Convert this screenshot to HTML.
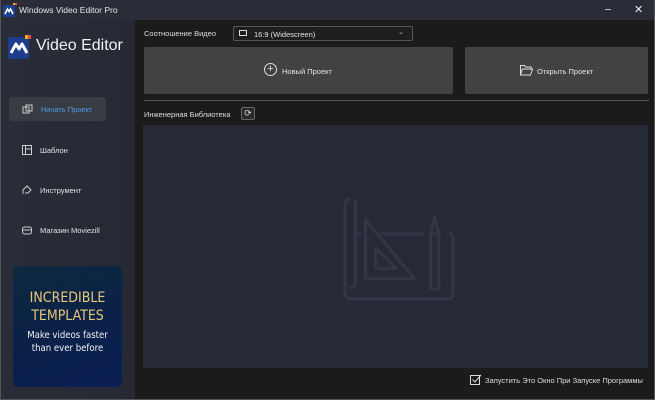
<!DOCTYPE html>
<html><head><meta charset="utf-8"><style>
*{margin:0;padding:0;box-sizing:border-box}
body{width:655px;height:400px;overflow:hidden;background:#1b1b1b;font-family:"Liberation Sans","DejaVu Sans",sans-serif;position:relative;color:#ddd}
.frame{position:absolute;inset:0;border:1px solid #555;border-top:none;pointer-events:none}
.title{position:absolute;left:0;top:0;width:655px;height:20px;background:#2a2c38;font-size:8.5px;color:#e6e6e6}
.side{position:absolute;left:0;top:20px;width:135px;height:380px;background:linear-gradient(90deg,#2a2d38,#262933)}
.main{position:absolute;left:135px;top:20px;width:520px;height:380px;background:#1b1b1b}
.abs{position:absolute}
.nav{position:absolute;left:22px;font-size:7.5px;color:#e4e4e4;display:flex;align-items:center;gap:8px}
</style></head><body>
<div class="title">
 <svg class="abs" style="left:3px;top:3px" width="14" height="14" viewBox="0 0 14 14"><rect x="0" y="2" width="12" height="12" fill="#1c3f8f"/><path d="M2 11 L4.5 6 L6 8.5 L7.5 6 L10 11" stroke="#fff" stroke-width="1.6" fill="none"/><rect x="10" y="0" width="2" height="2" fill="#f5a623"/><rect x="12" y="0" width="2" height="2" fill="#e84d3d"/></svg>
 <span class="abs" style="left:19px;top:5px">Windows Video Editor Pro</span>
 <div class="abs" style="left:605px;top:9px;width:6px;height:1px;background:#bbb"></div>
 <span class="abs" style="left:634px;top:3px;font-size:11px;font-weight:bold;color:#eee">✕</span>
</div>
<div class="side">
 <svg class="abs" style="left:8px;top:15px" width="24" height="24" viewBox="0 0 24 24"><rect x="0" y="2" width="21" height="22" rx="1" fill="#1d3c8c"/><path d="M3 18 L8 9 L11 14 L14 9 L19 18" stroke="#fff" stroke-width="3" fill="none" stroke-linejoin="round"/><rect x="17" y="0" width="3" height="4" fill="#f5a623"/><rect x="20" y="0" width="3" height="4" fill="#e84d3d"/></svg>
 <span class="abs" style="left:36px;top:17px;font-size:16px;color:#f2f2f2">Video Editor</span>
 <div class="abs" style="left:9px;top:77px;width:97px;height:24px;background:#3a3c43;border-radius:3px"></div>
 <div class="nav" style="top:84px;color:#4c9be8"><svg width="11" height="11" viewBox="0 0 11 11" fill="none" stroke="#ccc" stroke-width="1"><rect x="1" y="3" width="6" height="6"/><rect x="4" y="1" width="6" height="6"/></svg>Начать Проект</div>
 <div class="nav" style="top:125px"><svg width="10" height="10" viewBox="0 0 10 10" fill="none" stroke="#ccc" stroke-width="1"><rect x=".5" y=".5" width="9" height="9"/><path d="M3.5 .5V9.5M3.5 4H9.5"/></svg>Шаблон</div>
 <div class="nav" style="top:165px"><svg width="10" height="10" viewBox="0 0 10 10" fill="none" stroke="#ccc" stroke-width="1"><path d="M1 9V5L5 1L9 5L6 8H3"/></svg>Инструмент</div>
 <div class="nav" style="top:205px"><svg width="10" height="10" viewBox="0 0 10 10" fill="none" stroke="#ccc" stroke-width="1"><rect x=".5" y="2" width="9" height="7" rx="2"/><path d="M.5 5H9.5"/></svg>Магазин Moviezill</div>
 <div class="abs" style="left:13px;top:246px;width:109px;height:121px;border-radius:4px;background:linear-gradient(160deg,#0d2a3e 0%,#0b2147 50%,#0a1e55 100%);text-align:center;overflow:hidden">
  <div style="margin-top:23px;color:#e8c77a;font-size:14px;line-height:18px;font-family:'DejaVu Sans Condensed','DejaVu Sans',sans-serif">INCREDIBLE<br>TEMPLATES</div>
  <div style="margin-top:4px;color:#f2f2f2;font-size:9.5px;line-height:13px;font-family:'DejaVu Sans Condensed','DejaVu Sans',sans-serif">Make videos faster<br>than ever before</div>
 </div>
</div>
<div class="main">
 <span class="abs" style="left:9px;top:9px;font-size:7.5px;color:#ddd">Соотношение Видео</span>
 <div class="abs" style="left:98px;top:6px;width:180px;height:15px;border:1px solid #555;border-radius:2px;background:#1e1e1e;font-size:7.5px;color:#e4e4e4">
  <div class="abs" style="left:5px;top:3px;width:8px;height:6px;border:1.2px solid #ddd"></div>
  <span class="abs" style="left:20px;top:2.5px">16:9 (Widescreen)</span>
  <span class="abs" style="left:164px;top:1px;font-size:7px;color:#bbb">⌄</span>
 </div>
 <div class="abs" style="left:9px;top:27px;width:309px;height:47px;background:#424242;border-radius:2px"></div>
 <div class="abs" style="left:129px;top:43px;width:13px;height:13px;border:1.2px solid #ddd;border-radius:50%;font-size:11px;line-height:10px;text-align:center;color:#ddd">+</div>
 <span class="abs" style="left:147px;top:47px;font-size:7.5px;color:#e4e4e4">Новый Проект</span>
 <div class="abs" style="left:330px;top:27px;width:183px;height:47px;background:#424242;border-radius:2px"></div>
 <svg class="abs" style="left:385px;top:45px" width="13" height="11" viewBox="0 0 13 11" fill="none" stroke="#ddd" stroke-width="1"><path d="M.5 10V.5H4.5L5.5 2H11V4M.5 10L2.5 4H12.5L10.5 10Z"/></svg>
 <span class="abs" style="left:402px;top:47px;font-size:7.5px;color:#e4e4e4">Открыть Проект</span>
 <div class="abs" style="left:9px;top:80px;width:505px;height:1px;background:#555"></div>
 <span class="abs" style="left:9px;top:90px;font-size:7.5px;color:#ddd">Инженерная Библиотека</span>
 <div class="abs" style="left:106px;top:87px;width:14px;height:13px;border:1px solid #666;border-radius:2px;background:#2a2a2a;font-size:9px;line-height:11px;text-align:center;color:#ddd">⟳</div>
 <div class="abs" style="left:8px;top:105px;width:505px;height:243px;background:#262a36">
  <svg class="abs" style="left:194px;top:70px" width="122" height="106" viewBox="0 0 60 52" fill="none" stroke="#313645" stroke-width="1.6" stroke-linejoin="round">
   <path d="M7 2C5 2 4 3 4 5V48C4 50 5 51 7 51H55C56 51 57 50 57 49V21C57 20 56 19 55 19"/><path d="M9 2V43C9 45 8 45 6 46"/><path d="M9 19H12M21 19H43"/><path d="M14 12V41H38Z"/><path d="M19 26V36H29Z"/><path d="M46 19V45C46 47 50 47 50 45V19L48 11Z"/><path d="M46 19H50"/>
  </svg>
 </div>
 <svg class="abs" style="left:335px;top:354px" width="12" height="12" viewBox="0 0 12 12" fill="none" stroke="#ddd" stroke-width="1"><rect x=".5" y="1.5" width="9" height="9"/><path d="M2.5 5.5L5 8L11 1"/></svg>
 <span class="abs" style="left:350px;top:356px;font-size:7.5px;color:#ddd">Запустить Это Окно При Запуске Программы</span>
</div>
<div class="frame"></div>
</body></html>
